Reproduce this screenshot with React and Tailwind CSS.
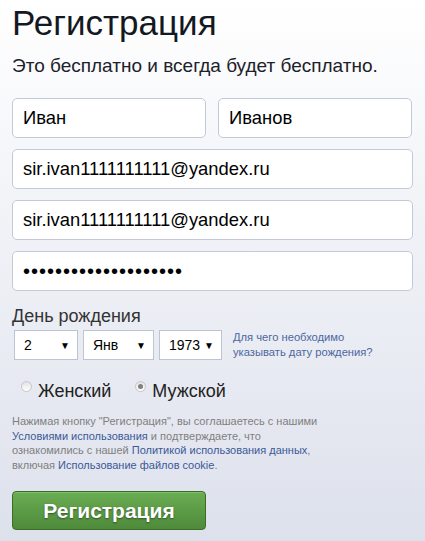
import React from 'react';

const font = { fontFamily: '"Liberation Sans", "DejaVu Sans", sans-serif' };

function Field({ value, className = '' }) {
  return (
    <input
      type="text"
      readOnly
      value={value}
      className={`h-10 rounded-[5px] border border-[#c3c9d9] bg-white px-[10px] text-[18.4px] text-black outline-none ${className}`}
    />
  );
}

function Select({ value, className = '' }) {
  return (
    <div className={`flex h-[30px] items-center justify-between border border-[#bdc4d4] bg-white pl-[9px] pr-[7px] text-[14px] text-black ${className}`}>
      <span>{value}</span>
      <span className="text-[10px]">▼</span>
    </div>
  );
}

function Radio({ checked, label }) {
  return (
    <label className="flex items-start gap-[6px]">
      <span className="mt-[1px] flex h-[11px] w-[11px] items-center justify-center rounded-full border border-[#c6c6c6] bg-gradient-to-b from-[#e2e2e2] to-white">
        {checked && <span className="h-[5px] w-[5px] rounded-full bg-[#808080]"></span>}
      </span>
      <span className="text-[18px] leading-[22px] text-[#222]">{label}</span>
    </label>
  );
}

export default function App() {
  return (
    <div style={font} className="min-h-[541px] w-[425px] bg-gradient-to-b from-white to-[#dde1ec] px-3 pt-[1px]">
      <h1 className="text-[35px] leading-[44px] text-[#141823]">Регистрация</h1>
      <p className="mt-[10px] text-[19px] leading-[22px] text-[#1d2129]">Это бесплатно и всегда будет бесплатно.</p>

      <div className="mt-[21px] flex flex-col gap-[11px]">
        <div className="flex gap-3">
          <Field value="Иван" className="w-[194px]" />
          <Field value="Иванов" className="w-[194px]" />
        </div>
        <Field value="sir.ivan1111111111@yandex.ru" className="w-full" />
        <Field value="sir.ivan1111111111@yandex.ru" className="w-full" />
        <Field value="••••••••••••••••••••" className="w-full !text-[20px] tracking-[1px]" />
      </div>

      <div className="mt-[14px] text-[18px] leading-[22px] text-[#333]">День рождения</div>
      <div className="mt-[3px] flex items-center pl-[2px]">
        <Select value="2" className="w-[64px]" />
        <Select value="Янв" className="ml-[5px] w-[71px]" />
        <Select value="1973" className="ml-[5px] w-[63px]" />
        <a className="ml-[11px] text-[11.2px] leading-[15px] text-[#4b67a1]">
          Для чего необходимо<br />указывать дату рождения?
        </a>
      </div>

      <div className="mt-[20px] flex items-start gap-[24px] pl-[9px]">
        <Radio label="Женский" />
        <Radio label="Мужской" checked />
      </div>

      {/* условия */}
      <div className="mt-[12px] text-[11px] leading-[14.5px] text-[#7f7f7f]">
        <p>Нажимая кнопку "Регистрация", вы соглашаетесь с нашими</p>
        <p><a className="text-[#3b5998]">Условиями использования</a> и подтверждаете, что</p>
        <p>ознакомились с нашей <a className="text-[#3b5998]">Политикой использования данных</a>,</p>
        <p>включая <a className="text-[#3b5998]">Использование файлов cookie</a>.</p>
      </div>

      <button className="mt-[19px] h-[39px] w-[194px] rounded-[4px] border border-[#3b6e22] bg-gradient-to-b from-[#6aad52] to-[#4e8a3b] text-[21px] font-bold text-white [text-shadow:0_1px_2px_rgba(0,0,0,0.45)] shadow-[inset_0_1px_0_#7cbf66]">
        Регистрация
      </button>
    </div>
  );
}
